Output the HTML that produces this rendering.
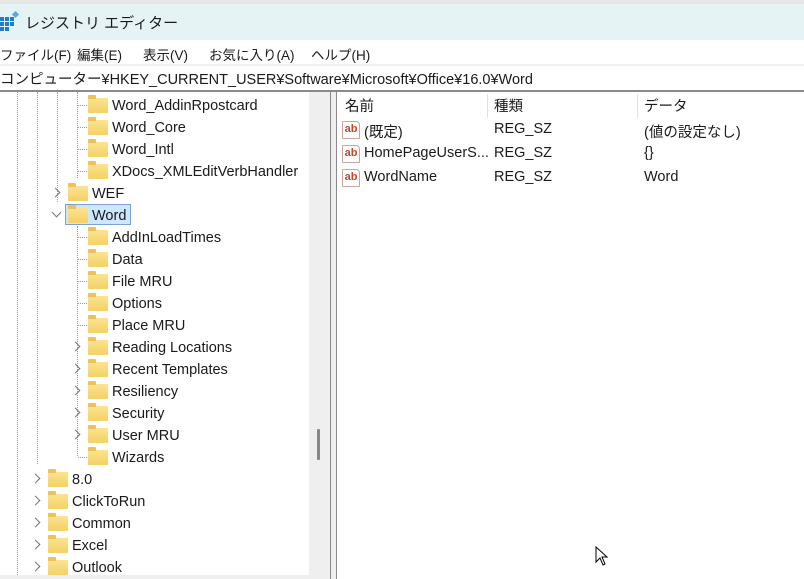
<!DOCTYPE html>
<html><head><meta charset="utf-8"><style>
*{margin:0;padding:0;box-sizing:border-box}
body{width:804px;height:579px;overflow:hidden;background:#fff;font-family:"Liberation Sans","Noto Sans CJK JP",sans-serif;font-size:14.5px;color:#1a1a1a;position:relative}
.a{position:absolute;white-space:nowrap}
.f{position:absolute;width:20px;height:15px;background:linear-gradient(#fbe391,#f5d164);border-radius:1px}
.f:before{content:"";position:absolute;left:0;top:-3px;width:8px;height:4px;background:#ecc35a;border-radius:1px 1px 0 0}
.t{position:absolute;line-height:20px}
.ar{position:absolute;width:7px;height:7px;border-right:1.3px solid #777;border-bottom:1.3px solid #777}
.vl{position:absolute;width:0;border-left:1px dotted #999}
.hl{position:absolute;height:0;border-top:1px dotted #999}
.ab{position:absolute;width:18px;height:18px;border:1px solid #c9a6a0;background:#fff;font:bold 11px "Liberation Sans",sans-serif;color:#c2452f;line-height:15px;text-align:center;border-radius:1px 4px 1px 1px}
.m{position:absolute;top:44px;font-size:13.5px;white-space:nowrap}
</style></head><body>
<div class="a" style="left:0;top:0;width:804px;height:4px;background:#e6e6e6"></div>
<div class="a" style="left:0;top:4px;width:804px;height:36px;background:#e5f3f5"></div>
<svg class="a" style="left:0;top:11px" width="20" height="20"><rect x="0" y="6" width="4" height="4" fill="#1e7fc9"/><rect x="5" y="6" width="4" height="4" fill="#1e7fc9"/><rect x="10" y="6" width="4" height="4" fill="#1e7fc9"/><rect x="0" y="11" width="4" height="4" fill="#1e7fc9"/><rect x="5" y="11" width="4" height="4" fill="#1e7fc9"/><rect x="10" y="11" width="4" height="4" fill="#1e7fc9"/><rect x="0" y="16" width="4" height="4" fill="#1e7fc9"/><rect x="5" y="16" width="4" height="4" fill="#1e7fc9"/><rect x="13" y="1" width="5" height="5" fill="#5aa9e0" transform="rotate(45 15.5 3.5)"/></svg>
<div class="a" style="left:25px;top:12px;font-size:15px">レジストリ エディター</div>
<div class="m" style="left:0">ファイル(F)</div>
<div class="m" style="left:77px">編集(E)</div>
<div class="m" style="left:143px">表示(V)</div>
<div class="m" style="left:209px">お気に入り(A)</div>
<div class="m" style="left:311px">ヘルプ(H)</div>
<div class="a" style="left:0;top:64px;width:804px;height:2px;background:#f0f0f0"></div>
<div class="a" style="left:0;top:68px;font-size:14.5px">コンピューター¥HKEY_CURRENT_USER¥Software¥Microsoft¥Office¥16.0¥Word</div>
<div class="a" style="left:0;top:90px;width:804px;height:2px;background:#8a8a8a"></div>
<div class="vl" style="left:17px;top:92px;height:487px"></div>
<div class="vl" style="left:37px;top:92px;height:372px"></div>
<div class="vl" style="left:57px;top:92px;height:110px"></div>
<div class="vl" style="left:77px;top:92px;height:86px"></div>
<div class="vl" style="left:77px;top:226px;height:230px"></div>
<div class="hl" style="left:78px;top:105px;width:9px"></div>
<div class="hl" style="left:78px;top:127px;width:9px"></div>
<div class="hl" style="left:78px;top:149px;width:9px"></div>
<div class="hl" style="left:78px;top:171px;width:9px"></div>
<div class="hl" style="left:78px;top:237px;width:9px"></div>
<div class="hl" style="left:78px;top:259px;width:9px"></div>
<div class="hl" style="left:78px;top:281px;width:9px"></div>
<div class="hl" style="left:78px;top:303px;width:9px"></div>
<div class="hl" style="left:78px;top:325px;width:9px"></div>
<div class="hl" style="left:78px;top:457px;width:9px"></div>
<div class="a" style="left:65px;top:204px;width:66px;height:21px;background:#cce8ff;border:1px solid #7da2ce"></div>
<div id="tree"></div>
<script>
var rows=[["Word_AddinRpostcard",3,0],["Word_Core",3,0],["Word_Intl",3,0],["XDocs_XMLEditVerbHandler",3,0],["WEF",2,1],["Word",2,2],["AddInLoadTimes",3,0],["Data",3,0],["File MRU",3,0],["Options",3,0],["Place MRU",3,0],["Reading Locations",3,1],["Recent Templates",3,1],["Resiliency",3,1],["Security",3,1],["User MRU",3,1],["Wizards",3,0],["8.0",1,1],["ClickToRun",1,1],["Common",1,1],["Excel",1,1],["Outlook",1,1]];
var h="";
rows.forEach(function(r,i){var c=105+22*i;var fx=[0,48,68,88][r[1]];
h+='<div class="f" style="left:'+fx+'px;top:'+(c-7)+'px"></div>';
h+='<div class="t" style="left:'+(fx+24)+'px;top:'+(c-9)+'px">'+r[0]+'</div>';
if(r[2]==1)h+='<div class="ar" style="left:'+(fx-16)+'px;top:'+(c-4)+'px;transform:rotate(-45deg)"></div>';
if(r[2]==2)h+='<div class="ar" style="left:'+(fx-15)+'px;top:'+(c-6)+'px;transform:rotate(45deg)"></div>';});
document.getElementById("tree").innerHTML=h;
</script>
<div class="a" style="left:309px;top:92px;width:21px;height:487px;background:#efefef"></div>
<div class="a" style="left:317px;top:429px;width:3px;height:31px;background:#888;border-radius:1px"></div>
<div class="a" style="left:0;top:575px;width:309px;height:4px;background:#efefef"></div>
<div class="a" style="left:330px;top:92px;width:1px;height:487px;background:#8a8a8a"></div>
<div class="a" style="left:331px;top:92px;width:5px;height:487px;background:#efefef"></div>
<div class="a" style="left:336px;top:92px;width:1px;height:487px;background:#8a8a8a"></div>
<div class="a" style="left:487px;top:94px;width:1px;height:24px;background:#e0e0e0"></div>
<div class="a" style="left:637px;top:94px;width:1px;height:24px;background:#e0e0e0"></div>
<div class="a" style="left:345px;top:95px">名前</div>
<div class="a" style="left:494px;top:95px">種類</div>
<div class="a" style="left:644px;top:95px">データ</div>
<div class="ab" style="left:342px;top:121px">ab</div>
<div class="ab" style="left:342px;top:145px">ab</div>
<div class="ab" style="left:342px;top:169px">ab</div>
<div class="a" style="left:364px;top:121px">(既定)</div>
<div class="a" style="left:364px;top:145px">HomePageUserS...</div>
<div class="a" style="left:364px;top:169px">WordName</div>
<div class="a" style="left:494px;top:121px">REG_SZ</div>
<div class="a" style="left:494px;top:145px">REG_SZ</div>
<div class="a" style="left:494px;top:169px">REG_SZ</div>
<div class="a" style="left:644px;top:121px">(値の設定なし)</div>
<div class="a" style="left:644px;top:145px">{}</div>
<div class="a" style="left:644px;top:169px">Word</div>
<svg class="a" style="left:595px;top:546px" width="14" height="22"><path d="M1 1 L1 16 L5 12 L8 19 L10 18 L7 11 L12 11 Z" fill="#fff" stroke="#000" stroke-width="1"/></svg>
</body></html>
